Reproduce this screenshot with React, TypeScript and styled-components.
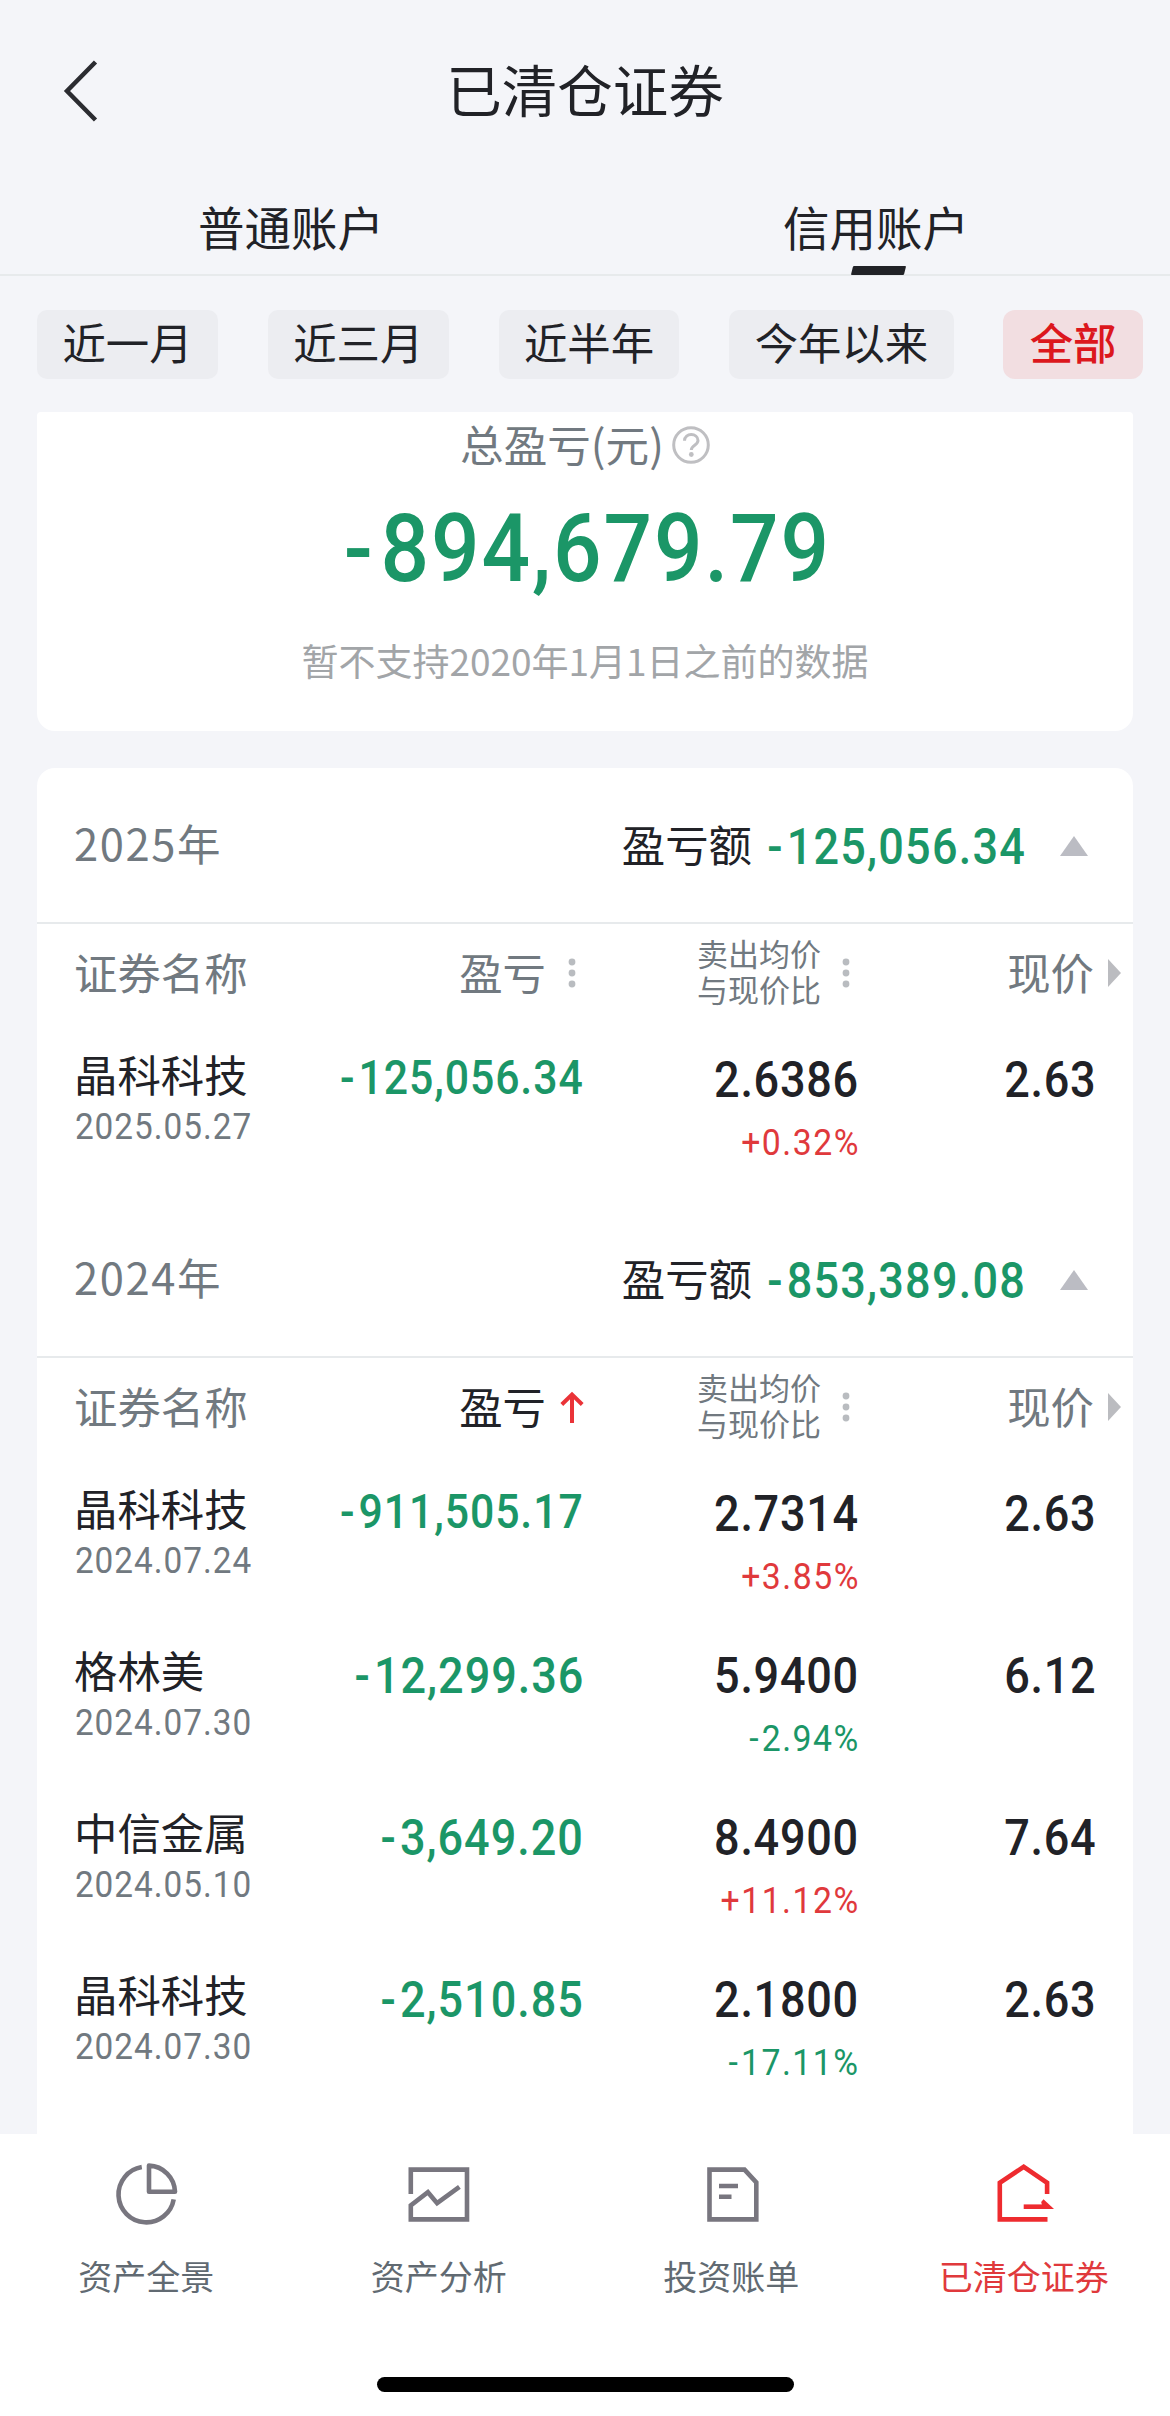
import React from "react";
import styled, { createGlobalStyle } from "styled-components";

const CJK = `"Noto Sans CJK SC", "Noto Sans", sans-serif`;
const NUM = `Roboto, "Noto Sans CJK SC", sans-serif`;

const c = {
  bg: "#f4f5f9",
  ink: "#212227",
  grey: "#717980",
  light: "#a2a5a8",
  green: "#1b9667",
  red: "#e0393c",
  icon: "#78767f",
  line: "#e7eaec",
};

const Global = createGlobalStyle`
  * { box-sizing: border-box; }
  body { margin: 0; background: ${c.bg}; }
  svg { display: block; flex: none; }
`;

const Screen = styled.div`
  width: 1170px;
  height: 2416px;
  display: flex;
  flex-direction: column;
  overflow: hidden;
  background: ${c.bg};
  color: ${c.ink};
  font-family: ${CJK};
  white-space: nowrap;
`;

const NavBar = styled.header`
  height: 182px;
  flex: none;
  display: grid;
  grid-template-columns: 200px 1fr 200px;
  align-items: center;
`;

const BackButton = styled.button`
  border: 0;
  background: none;
  padding: 0 0 0 63px;
`;

const Title = styled.h1`
  margin: 0;
  padding-bottom: 6px;
  text-align: center;
  font-size: 55.5px;
  line-height: 80px;
  font-weight: 400;
`;

const AccountTabs = styled.nav`
  height: 94px;
  flex: none;
  display: grid;
  grid-template-columns: 1fr 1fr;
  border-bottom: 2px solid ${c.line};
`;

const AccountTab = styled.div`
  position: relative;
  padding-right: 3px;
  text-align: center;
  font-size: 46.5px;
  line-height: 87px;
`;

const TabMark = styled.i`
  position: absolute;
  left: 50%;
  bottom: -1px;
  width: 53px;
  height: 9px;
  margin-left: -26px;
  border-radius: 1px;
  background: ${c.ink};
  transform: skewX(-14deg);
`;

const Filters = styled.div`
  height: 136px;
  flex: none;
  display: flex;
  align-items: flex-start;
  gap: 49.8px;
  padding: 34px 0 0 37px;
`;

const Chip = styled.div<{ $on?: boolean }>`
  height: 69px;
  padding: 0 ${(p) => (p.$on ? 26.3 : 25.4)}px;
  border-radius: ${(p) => (p.$on ? 12 : 10)}px;
  font-size: 43.4px;
  line-height: 63px;
  color: ${(p) => (p.$on ? "#dc171d" : c.ink)};
  background: ${(p) => (p.$on ? "#f2dee1" : "#ecedf1")};
  font-weight: ${(p) => (p.$on ? 500 : 400)};
`;

const Summary = styled.section`
  margin: 0 37px;
  height: 319px;
  flex: none;
  display: flex;
  flex-direction: column;
  align-items: center;
  background: #fff;
  border-radius: 4px 4px 18px 18px;
`;

const SummaryLabel = styled.div`
  display: flex;
  align-items: center;
  gap: 8px;
  height: 66px;
  font-size: 43.6px;
  line-height: 60px;
  color: ${c.grey};
`;

const LabelText = styled.span`
  padding-bottom: 5px;
`;

const Figure = styled.div`
  font-family: ${NUM};
  letter-spacing: 0.022em;
  transform: scaleX(0.9);
`;

const Total = styled(Figure)`
  height: 137px;
  padding-left: 6px;
  font-weight: 500;
  font-size: 95px;
  line-height: 141px;
  color: ${c.green};
`;

const Sign = styled.span`
  letter-spacing: 0.09em;
`;

const Note = styled.div`
  font-size: 37px;
  line-height: 90px;
  color: ${c.light};
`;

const Ledger = styled.section`
  flex: 1;
  min-height: 0;
  margin: 37px 37px 0;
  overflow: hidden;
  background: #fff;
  border-radius: 18px 18px 0 0;
`;

const YearBlock = styled.div`
  height: 434px;
  &:last-child {
    height: auto;
  }
`;

const YearHead = styled.div`
  height: 156px;
  display: flex;
  align-items: center;
  padding: 0 45px 0 37px;
  border-bottom: 2px solid ${c.line};
`;

const Year = styled.div`
  flex: 1;
  padding-bottom: 4px;
  font-size: 43.5px;
  line-height: 64px;
  letter-spacing: 1.6px;
  color: ${c.grey};
`;

const YearLabel = styled.div`
  padding-bottom: 4px;
  font-size: 43.4px;
  line-height: 64px;
  margin-right: 15px;
`;

const YearSum = styled(Figure)`
  width: 259px;
  margin-right: 34px;
  padding-top: 3px;
  display: flex;
  justify-content: flex-end;
  font-weight: 500;
  font-size: 50px;
  letter-spacing: 0.027em;
  transform-origin: right;
  color: ${c.green};
`;

const Caret = styled.svg`
  margin-top: 2px;
`;

const columns = `
  display: grid;
  grid-template-columns: 252px 257px 275px 237px;
  padding: 0 38px 0 37px;
`;

const ColumnHead = styled.div`
  ${columns}
  height: 98px;
  align-items: center;
  font-size: 43.4px;
  line-height: 64px;
  color: ${c.grey};
`;

const HeadCell = styled.div<{ $pad?: number; $active?: boolean; $gap?: number }>`
  display: flex;
  align-items: center;
  justify-content: flex-end;
  gap: ${(p) => p.$gap ?? 0}px;
  margin-right: ${(p) => p.$pad ?? 0}px;
  color: ${(p) => (p.$active ? c.ink : c.grey)};
`;

const TwoLine = styled.div`
  display: grid;
  padding-bottom: 4px;
  font-size: 31px;
  line-height: 36px;
`;

const Row = styled.div`
  ${columns}
  height: 162px;
`;

const Cell = styled.div<{ $right?: boolean }>`
  display: flex;
  flex-direction: column;
  align-items: ${(p) => (p.$right ? "flex-end" : "flex-start")};
`;

const Name = styled.div`
  padding-top: 19px;
  font-size: 43.4px;
  line-height: 64px;
`;

const DateText = styled(Figure)`
  padding-left: 1px;
  font-size: 37px;
  line-height: 44px;
  letter-spacing: 0.03em;
  transform-origin: left;
  color: ${c.grey};
`;

const Amount = styled(Figure)<{ $green?: boolean; $small?: boolean }>`
  margin-right: -1px;
  padding-top: ${(p) => (p.$small ? 24 : 26)}px;
  font-weight: 500;
  font-size: ${(p) => (p.$small ? 47.5 : 50)}px;
  line-height: 64px;
  letter-spacing: ${(p) => (p.$green ? 0.022 : 0.016)}em;
  transform-origin: right;
  color: ${(p) => (p.$green ? c.green : c.ink)};
`;

const Percent = styled(Figure)<{ $up: boolean }>`
  margin: 8px -2px 0 0;
  font-size: 37.5px;
  line-height: 44px;
  letter-spacing: 0.045em;
  transform-origin: right;
  color: ${(p) => (p.$up ? c.red : c.green)};
`;

const TabBar = styled.footer`
  height: 282px;
  flex: none;
  display: flex;
  flex-direction: column;
  align-items: center;
  background: #fff;
`;

const TabItems = styled.div`
  width: 100%;
  height: 243px;
  display: grid;
  grid-template-columns: repeat(4, 1fr);
`;

const TabItem = styled.div<{ $on?: boolean }>`
  display: flex;
  flex-direction: column;
  align-items: center;
  padding-top: 26px;
  font-size: 34px;
  line-height: 50px;
  color: ${(p) => (p.$on ? c.red : "#616a72")};
  svg {
    margin-bottom: 21px;
  }
`;

const HomeBar = styled.div`
  width: 417px;
  height: 15px;
  border-radius: 8px;
  background: #000;
`;

const Signed = ({ value }: { value: string }) =>
  value.startsWith("-") ? (
    <span>
      <Sign>-</Sign>
      {value.slice(1)}
    </span>
  ) : (
    <span>{value}</span>
  );

const Dots = () => (
  <svg width="8" height="30" viewBox="0 0 8 30" fill="#b9bcc0">
    <circle cx="4" cy="4" r="3.4" />
    <circle cx="4" cy="15" r="3.4" />
    <circle cx="4" cy="26" r="3.4" />
  </svg>
);

const SortUp = () => (
  <svg width="24" height="32" viewBox="0 0 24 32" fill="none" stroke="#ea3338" strokeWidth="4">
    <path d="M12 32V4M1.8 13.500 12 3.500l10.200 10" />
  </svg>
);

const icons = {
  pie: (
    <>
      <path d="M30.800 7.100A27.800 27.800 0 1 0 62.700 39.300" />
      <path d="M38 5.600v26.100H64A27 27 0 0 0 38 5.600Z" strokeLinejoin="round" />
    </>
  ),
  chart: <path d="M6.800 34V9.600H63v49.800H6.800V45.300L23.900 32.200l9.200 11L55.400 26.800" />,
  bill: (
    <>
      <path d="M13.500 9.600H48.500L60.300 22.500v36.900H13.500Z" />
      <path d="M23 26h19M23 36.700h12.500" />
    </>
  ),
  house: (
    <>
      <path d="M58.500 59.400H10.800V22.800L34.700 6.800l23.400 16V34" />
      <path d="M34.700 46.700h22" />
      <path d="M54.500 39.300 65 49H54l-1.800-7Z" fill="currentColor" stroke="none" />
    </>
  ),
};

const tabs: { icon: keyof typeof icons; label: string; on?: boolean }[] = [
  { icon: "pie", label: "资产全景" },
  { icon: "chart", label: "资产分析" },
  { icon: "bill", label: "投资账单" },
  { icon: "house", label: "已清仓证券", on: true },
];

const filters = ["近一月", "近三月", "近半年", "今年以来", "全部"];

const years = [
  {
    year: "2025年",
    sum: "-125,056.34",
    sorted: false,
    rows: [["晶科科技", "2025.05.27", "-125,056.34", "2.6386", "+0.32%", "2.63"]],
  },
  {
    year: "2024年",
    sum: "-853,389.08",
    sorted: true,
    rows: [
      ["晶科科技", "2024.07.24", "-911,505.17", "2.7314", "+3.85%", "2.63"],
      ["格林美", "2024.07.30", "-12,299.36", "5.9400", "-2.94%", "6.12"],
      ["中信金属", "2024.05.10", "-3,649.20", "8.4900", "+11.12%", "7.64"],
      ["晶科科技", "2024.07.30", "-2,510.85", "2.1800", "-17.11%", "2.63"],
    ],
  },
];

export default function App() {
  return (
    <Screen>
      <Global />
      <NavBar>
        <BackButton aria-label="返回">
          <svg width="36" height="62" viewBox="0 0 36 62" fill="none" stroke="#2b2c31" strokeWidth="4.500">
            <path d="M32.500 2 4 31l28.500 29" />
          </svg>
        </BackButton>
        <Title>已清仓证券</Title>
      </NavBar>
      <AccountTabs>
        <AccountTab>普通账户</AccountTab>
        <AccountTab>
          信用账户
          <TabMark />
        </AccountTab>
      </AccountTabs>
      <Filters>
        {filters.map((f) => (
          <Chip key={f} $on={f === "全部"}>
            {f}
          </Chip>
        ))}
      </Filters>
      <Summary>
        <SummaryLabel>
          <LabelText>总盈亏(元)</LabelText>
          <svg width="38" height="38" viewBox="0 0 38 38" fill="none" stroke="#bfbfc2" strokeWidth="3">
            <circle cx="19" cy="19" r="17.300" />
            <path d="M12.500 14.800c0-8.500 13.500-8 13.500-.3 0 4.800-6.700 4.500-6.700 9.500" />
            <circle cx="19.300" cy="28.500" r="2.400" fill="#bfbfc2" stroke="none" />
          </svg>
        </SummaryLabel>
        <Total>
          <Signed value="-894,679.79" />
        </Total>
        <Note>暂不支持2020年1月1日之前的数据</Note>
      </Summary>
      <Ledger>
        {years.map((y) => (
          <YearBlock key={y.year}>
            <YearHead>
              <Year>{y.year}</Year>
              <YearLabel>盈亏额</YearLabel>
              <YearSum>
                <Signed value={y.sum} />
              </YearSum>
              <Caret width="28" height="20" viewBox="0 0 28 20" fill="#bbbcc3">
                <path d="M14 0 28 20H0Z" />
              </Caret>
            </YearHead>
            <ColumnHead>
              <LabelText>证券名称</LabelText>
              <HeadCell $active={y.sorted} $gap={y.sorted ? 14 : 22} $pad={y.sorted ? -1 : 7}>
                <LabelText>盈亏</LabelText>
                {y.sorted ? <SortUp /> : <Dots />}
              </HeadCell>
              <HeadCell $gap={21} $pad={8}>
                <TwoLine>
                  <span>卖出均价</span>
                  <span>与现价比</span>
                </TwoLine>
                <Dots />
              </HeadCell>
              <HeadCell $gap={14} $pad={-26}>
                <LabelText>现价</LabelText>
                <svg width="13" height="28" viewBox="0 0 13 28" fill="#bbbcc0">
                  <path d="M0 0 13 14 0 28Z" />
                </svg>
              </HeadCell>
            </ColumnHead>
            {y.rows.map(([name, date, amount, avg, pct, price]) => (
              <Row key={name + date}>
                <Cell>
                  <Name>{name}</Name>
                  <DateText>{date}</DateText>
                </Cell>
                <Cell $right>
                  <Amount $green $small={amount.length > 10}>
                    <Signed value={amount} />
                  </Amount>
                </Cell>
                <Cell $right>
                  <Amount>{avg}</Amount>
                  <Percent $up={pct.startsWith("+")}>
                    <Signed value={pct} />
                  </Percent>
                </Cell>
                <Cell $right>
                  <Amount>{price}</Amount>
                </Cell>
              </Row>
            ))}
          </YearBlock>
        ))}
      </Ledger>
      <TabBar>
        <TabItems>
          {tabs.map((t) => (
            <TabItem key={t.label} $on={t.on}>
              <svg
                width="70"
                height="70"
                viewBox="0 0 70 70"
                fill="none"
                stroke={t.on ? "#ee2b2f" : c.icon}
                color="#ee2b2f"
                strokeWidth="4.600"
              >
                {icons[t.icon]}
              </svg>
              {t.label}
            </TabItem>
          ))}
        </TabItems>
        <HomeBar />
      </TabBar>
    </Screen>
  );
}
